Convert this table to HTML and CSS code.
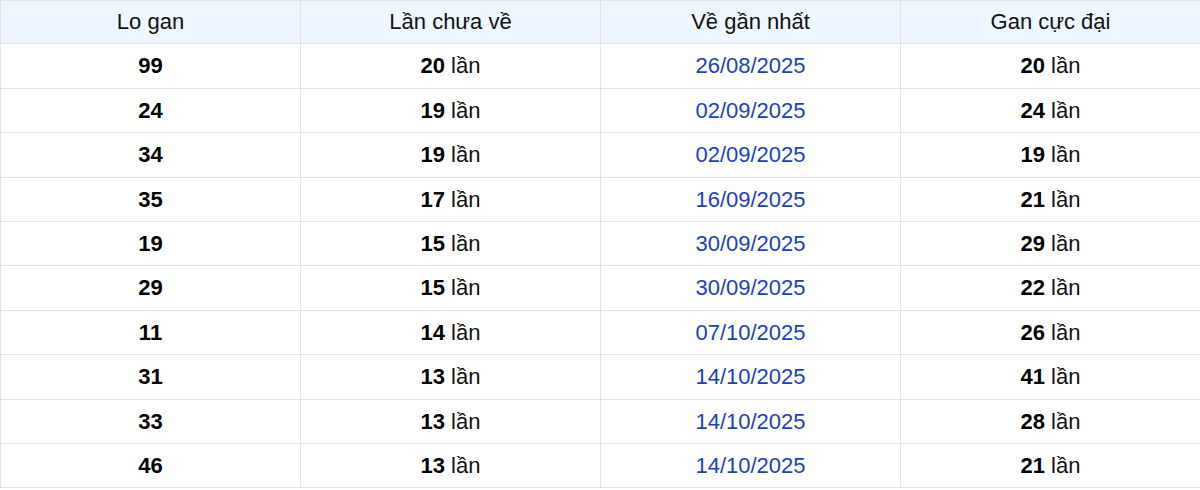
FILE: index.html
```html
<!DOCTYPE html>
<html lang="vi">
<head>
<meta charset="utf-8">
<title>Lo gan</title>
<link rel="stylesheet" href="styles.css">
</head>
<body>
<table class="gan-table">
  <thead>
    <tr><th>Lo gan</th><th>Lần chưa về</th><th>Về gần nhất</th><th>Gan cực đại</th></tr>
  </thead>
  <tbody>
    <tr><td><b>99</b></td><td><b>20</b> lần</td><td class="date">26/08/2025</td><td><b>20</b> lần</td></tr>
    <tr><td><b>24</b></td><td><b>19</b> lần</td><td class="date">02/09/2025</td><td><b>24</b> lần</td></tr>
    <tr><td><b>34</b></td><td><b>19</b> lần</td><td class="date">02/09/2025</td><td><b>19</b> lần</td></tr>
    <tr><td><b>35</b></td><td><b>17</b> lần</td><td class="date">16/09/2025</td><td><b>21</b> lần</td></tr>
    <tr><td><b>19</b></td><td><b>15</b> lần</td><td class="date">30/09/2025</td><td><b>29</b> lần</td></tr>
    <tr><td><b>29</b></td><td><b>15</b> lần</td><td class="date">30/09/2025</td><td><b>22</b> lần</td></tr>
    <tr><td><b>11</b></td><td><b>14</b> lần</td><td class="date">07/10/2025</td><td><b>26</b> lần</td></tr>
    <tr><td><b>31</b></td><td><b>13</b> lần</td><td class="date">14/10/2025</td><td><b>41</b> lần</td></tr>
    <tr><td><b>33</b></td><td><b>13</b> lần</td><td class="date">14/10/2025</td><td><b>28</b> lần</td></tr>
    <tr><td><b>46</b></td><td><b>13</b> lần</td><td class="date">14/10/2025</td><td><b>21</b> lần</td></tr>
  </tbody>
</table>
</body>
</html>
```

FILE: styles.css
```css
html, body {
  margin: 0;
  padding: 0;
  background: #ffffff;
}
body {
  font-family: "Liberation Sans", Arial, sans-serif;
  color: #111111;
}
.gan-table {
  border-collapse: collapse;
  width: 1201px;
  table-layout: fixed;
  font-size: 22px;
}
.gan-table th,
.gan-table td {
  border: 1px solid #e2e4e8;
  text-align: center;
  padding: 9px 8px;
  line-height: 25.4px;
}
.gan-table th {
  background: #eef6ff;
  font-weight: 400;
  padding: 8px 8px 9px;
}
.gan-table b {
  font-weight: 700;
  color: #000000;
}
.gan-table td.date {
  color: #1c3fbd;
}
```
